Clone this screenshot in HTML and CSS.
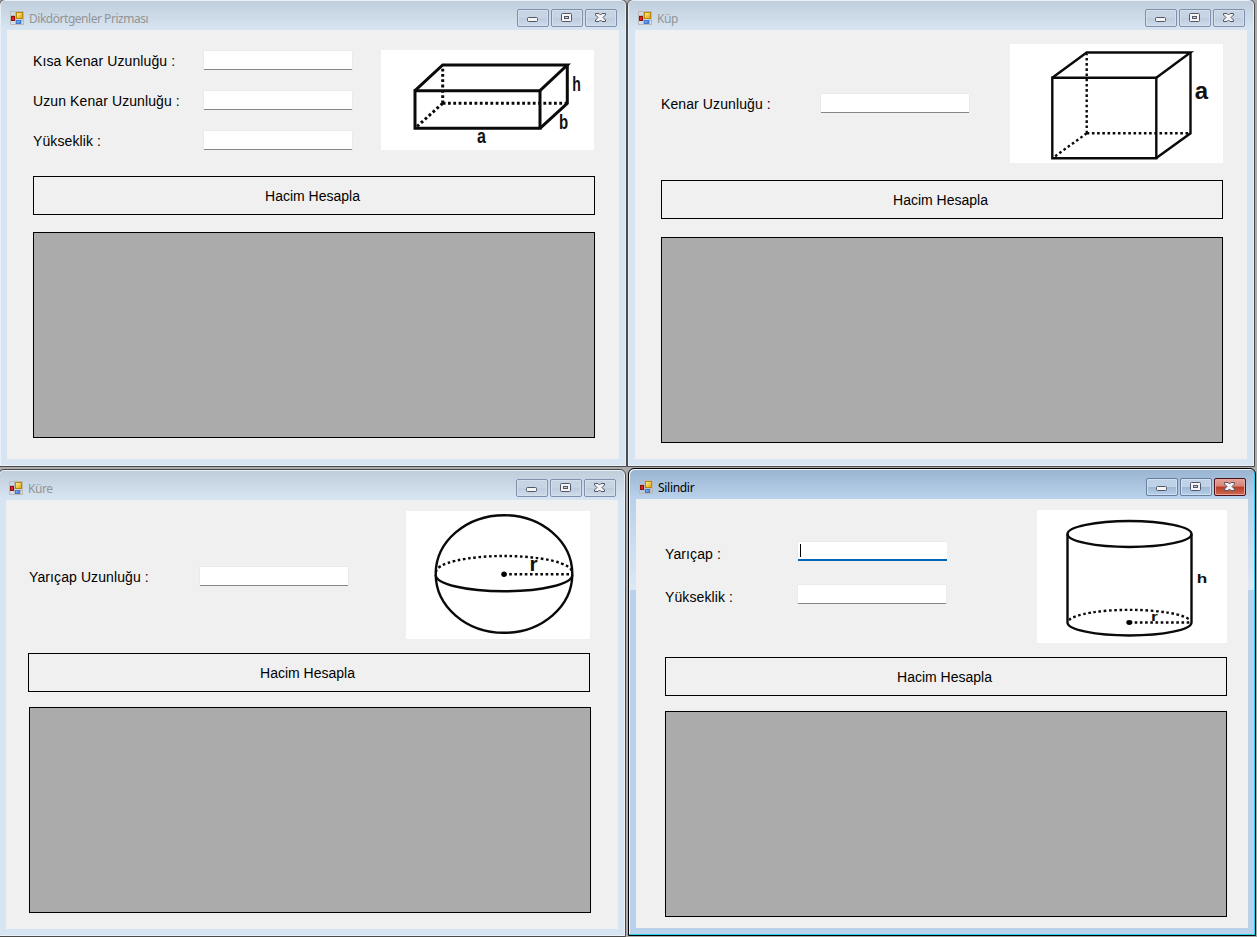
FILE: index.html
```html
<!DOCTYPE html>
<html lang="tr">
<head>
<meta charset="utf-8">
<title>Hacim Hesaplama</title>
<link rel="stylesheet" href="styles.css">
</head>
<body>
<svg class="defs" width="0" height="0">
  <defs>
    <linearGradient id="gold" x1="0" y1="0" x2="1" y2="1"><stop offset="0" stop-color="#fff3a0"/><stop offset="1" stop-color="#e0a000"/></linearGradient>
    <linearGradient id="blue" x1="0" y1="0" x2="1" y2="1"><stop offset="0" stop-color="#9cc4ff"/><stop offset="1" stop-color="#2f6bd8"/></linearGradient>
  </defs>
  <symbol id="app" viewBox="0 0 14 14">
    <path d="M.5 .5h13v13h-13zM.5 4.500h5M.5 9.500h13M5.500 .5v13M11.500 8v5.500" fill="none" stroke="#bcb9b9"/>
    <rect x="6.500" y="1.500" width="6" height="6" fill="url(#gold)" stroke="#b8860b"/>
    <rect x="1.500" y="5.500" width="3" height="4" fill="#d8281c" stroke="#8e0f0b"/>
    <rect x="6.500" y="9.500" width="4" height="3" fill="url(#blue)" stroke="#4478cf"/>
  </symbol>
  <symbol id="min" viewBox="0 0 30 16">
    <rect x="9.500" y="7.500" width="10" height="4" rx="1" fill="#f4f4f4" stroke="#535666"/>
  </symbol>
  <symbol id="max" viewBox="0 0 30 16">
    <rect x="9.500" y="3.500" width="10" height="8" rx="1" fill="#f4f4f4" stroke="#535666"/>
    <rect x="12.500" y="6.500" width="4" height="2" fill="#c3d0e4" stroke="#535666"/>
  </symbol>
  <symbol id="close" viewBox="0 0 30 16">
    <path d="M9.500 3.500h3.500l1.500 1.500 1.500-1.500h3.500v1.500l-2.500 2.500 2.500 2.500v1.500h-3.500l-1.500-1.500-1.500 1.500h-3.500v-1.500l2.500-2.500-2.500-2.500z" fill="#f4f4f4" stroke="#535666"/>
  </symbol>
</svg>
<main class="desktop">
  <section class="window prism">
    <header class="titlebar">
      <svg class="app-icon"><use href="#app"/></svg><h1 class="title">Dikdörtgenler Prizması</h1>
      <div class="controls"><button class="ctl"><svg><use href="#min"/></svg></button><button class="ctl"><svg><use href="#max"/></svg></button><button class="ctl"><svg><use href="#close"/></svg></button></div>
    </header>
    <div class="client">
      <div class="top">
        <div class="form">
          <label for="p1">Kısa Kenar Uzunluğu :</label><input id="p1" class="field">
          <label for="p2">Uzun Kenar Uzunluğu :</label><input id="p2" class="field">
          <label for="p3">Yükseklik :</label><input id="p3" class="field">
        </div>
        <svg class="figure" width="213" height="100" viewBox="0 0 213 100">
          <g class="line thick"><path d="M34 40.700H159V78.300H34z"/><path d="M34 40.700L61.700 15H186.300L159 40.700"/><path d="M186.300 15V53.300L159 78.300"/></g>
          <path class="dots thick" d="M61.700 53.300H186M61.700 53.300V17M61.700 53.300L34 78.300"/>
          <text transform="translate(191.300 41) scale(.72 1)" font-size="19.500">h</text>
          <text transform="translate(178 78.500) scale(.77 1)" font-size="19.500">b</text>
          <text transform="translate(96 92.500) scale(.8 1)" font-size="20">a</text>
        </svg>
      </div>
      <button class="calc">Hacim Hesapla</button>
      <div class="grid"></div>
    </div>
  </section>

  <section class="window cube">
    <header class="titlebar">
      <svg class="app-icon"><use href="#app"/></svg><h1 class="title">Küp</h1>
      <div class="controls"><button class="ctl"><svg><use href="#min"/></svg></button><button class="ctl"><svg><use href="#max"/></svg></button><button class="ctl"><svg><use href="#close"/></svg></button></div>
    </header>
    <div class="client">
      <div class="top">
        <div class="form"><label for="c1">Kenar Uzunluğu :</label><input id="c1" class="field"></div>
        <svg class="figure" width="213" height="119" viewBox="0 0 213 119">
          <g class="line"><path d="M42.300 33.700H146.300V114.200H42.300z"/><path d="M42.300 33.700L76.700 8.500H180.500L146.300 33.700"/><path d="M180.500 8.500V89.300L146.300 114"/></g>
          <path class="dots" d="M76.700 89.300H180M76.700 89.300V10M76.700 89.300L42.700 114"/>
          <text x="184.800" y="55" font-size="24">a</text>
        </svg>
      </div>
      <button class="calc">Hacim Hesapla</button>
      <div class="grid"></div>
    </div>
  </section>

  <section class="window sphere">
    <header class="titlebar">
      <svg class="app-icon"><use href="#app"/></svg><h1 class="title">Küre</h1>
      <div class="controls"><button class="ctl"><svg><use href="#min"/></svg></button><button class="ctl"><svg><use href="#max"/></svg></button><button class="ctl"><svg><use href="#close"/></svg></button></div>
    </header>
    <div class="client">
      <div class="top">
        <div class="form"><label for="s1">Yarıçap Uzunluğu :</label><input id="s1" class="field"></div>
        <svg class="figure" width="184" height="128" viewBox="0 0 184 128">
          <g class="line"><ellipse cx="98" cy="63" rx="68.300" ry="58.800"/><path d="M29.700 64A68.300 16.300 0 0 0 166.300 64"/></g>
          <path class="dots" d="M30 61A68 16 0 0 1 166 61M98 63.200H166"/>
          <circle cx="98" cy="63.200" r="2.700"/>
          <text x="123.500" y="60" font-size="21">r</text>
        </svg>
      </div>
      <button class="calc">Hacim Hesapla</button>
      <div class="grid"></div>
    </div>
  </section>

  <section class="window cylinder active">
    <header class="titlebar">
      <svg class="app-icon"><use href="#app"/></svg><h1 class="title">Silindir</h1>
      <div class="controls"><button class="ctl"><svg><use href="#min"/></svg></button><button class="ctl"><svg><use href="#max"/></svg></button><button class="ctl danger"><svg><use href="#close"/></svg></button></div>
    </header>
    <div class="client">
      <div class="top">
        <div class="form">
          <label for="y1">Yarıçap :</label><div id="y1" class="field focused"><span class="caret"></span></div>
          <label for="y2">Yükseklik :</label><input id="y2" class="field">
        </div>
        <svg class="figure" width="190" height="133" viewBox="0 0 190 133">
          <g class="line"><ellipse cx="92.500" cy="24" rx="62" ry="13"/><path d="M30.500 24V112.500A62 13 0 0 0 154.500 112.500V24"/></g>
          <path class="dots" d="M32 110A62 13 0 0 1 153 110M92.500 112.500H154"/>
          <ellipse cx="92.300" cy="112.500" rx="3" ry="2.400"/>
          <text transform="translate(159.800 73) scale(1.320 1)" font-size="13">h</text>
          <text transform="translate(114 110.500) scale(1.300 1)" font-size="13.500">r</text>
        </svg>
      </div>
      <button class="calc">Hacim Hesapla</button>
      <div class="grid"></div>
    </div>
  </section>
</main>
</body>
</html>
```
FILE: styles.css
```css
* { box-sizing: border-box; }
body { margin: 0; }
.defs { position: absolute; }
.desktop {
  position: relative;
  width: 1257px;
  height: 937px;
  overflow: hidden;
  background: #ababab;
  font-family: "Liberation Sans", Arial, sans-serif;
}

/* Window frame */
.window {
  position: absolute;
  width: 628px;
  height: 468px;
  padding: 0 7px 6px;
  border: 1px solid #4a4a4a;
  border-radius: 6px 6px 0 0;
  background: linear-gradient(#bfcddb, #d7e4f2 29px);
  box-shadow: inset 0 0 0 1px #e9eff6;
}
.prism { left: -1px; top: -1px; }
.cube { left: 627px; top: -1px; }
.sphere { left: -2px; top: 469px; }
.cylinder { left: 628px; top: 468px; }
.active {
  border-color: #000;
  background:
    linear-gradient(#b9d1ea, #dce8f6) 0 30px / 100% 91px no-repeat,
    linear-gradient(#99b4d1, #b9d1ea 29px);
  box-shadow: inset -1px -1px #28cfea, inset 1px 1px #f0f6fb;
}
.titlebar {
  display: flex;
  align-items: flex-start;
  height: 30px;
  padding: 9px 2px 0 3px;
}
.app-icon { flex: none; width: 14px; height: 14px; margin-top: 2px; }
.title {
  flex: 1;
  margin: 0 0 0 5px;
  font: 12px/20px "Noto Sans", "Open Sans", sans-serif;
  letter-spacing: -0.47px;
  color: #949494;
}
.active .title { color: #000; letter-spacing: -0.3px; }
.controls { display: flex; flex: none; gap: 2px; }
.ctl {
  width: 32px;
  height: 18px;
  padding: 0;
  border: 1px solid #8290b0;
  border-radius: 2px;
  background: linear-gradient(#c6d4e3 50%, #bdcbdd 50%, #cddbeb);
  box-shadow: inset 0 0 0 1px #d5e0ed;
}
.ctl svg { display: block; width: 30px; height: 16px; }
.active .ctl {
  border-color: #6a7f9e;
  background: linear-gradient(#bfd2e8 50%, #9db7d5 50%, #b7d0ea);
  box-shadow: inset 0 0 0 1px #cfe0f1;
}
.active .danger {
  border-color: #4d1119;
  background: linear-gradient(#e6a298, #d98478 45%, #b83a26 50%, #cf6a52);
  box-shadow: inset 0 0 0 1px #e5a79b;
}

/* Form contents */
.client {
  width: 612px;
  height: 429px;
  background: #f0f0f0;
  padding: 20px 25px 0 26px;
}
.top { display: flex; justify-content: space-between; }
.form {
  display: grid;
  grid-template-columns: 171px 148px;
  grid-auto-rows: 19px;
  row-gap: 21px;
  margin-top: 1px;
  align-content: start;
}
.form label {
  font-size: 14px;
  line-height: 21px;
  letter-spacing: 0.1px;
  white-space: nowrap;
  color: #000;
}
.field {
  width: 148px;
  height: 19px;
  padding: 0 3px;
  border: 0;
  border-bottom: 1px solid #868686;
  background: #fff;
  box-shadow: 0 -1px #eaeaea, -1px 0 #eaeaea, 1px 0 #eaeaea;
}
.focused {
  width: 149px;
  border-bottom: 2px solid #0067b8;
  padding: 2px 2px 0;
  box-shadow: 0 -1px #eaeaea, -1px 0 #eaeaea;
}
.caret { display: block; width: 1px; height: 13px; background: #000; }
.calc {
  display: block;
  width: 562px;
  height: 39px;
  margin: 26px 0 0;
  padding: 0 3px 0 0;
  border: 1px solid #000;
  background: #f0f0f0;
  font: 14px/20px "Liberation Sans", Arial, sans-serif;
  color: #000;
}
.grid {
  width: 562px;
  height: 206px;
  margin-top: 17px;
  border: 1px solid #000;
  background: #ababab;
}
.cube .client { padding: 14px 24px 0 26px; }
.cube .form { grid-template-columns: 160px 148px; margin-top: 50px; }
.cube .calc { margin-top: 17px; }
.cube .grid { margin-top: 18px; }

.sphere .client { padding: 11px 28px 0 22px; }
.sphere .form { grid-template-columns: 171px 148px; margin: 56px 0 0 1px; }
.sphere .calc { margin-top: 14px; }
.sphere .grid { margin: 15px 0 0 1px; }

.cylinder .client { padding: 11px 21px 0 29px; }
.cylinder .form { grid-template-columns: 133px 148px; row-gap: 24px; margin-top: 32px; }
.cylinder label { line-height: 24px; }
.cylinder .calc { margin-top: 14px; }
.cylinder .grid { margin-top: 15px; }

/* Solid figures */
.figure { display: block; flex: none; background: #fff; }
.figure text { font-family: "Liberation Sans", Arial, sans-serif; font-weight: 700; fill: #111; }
.line { fill: none; stroke: #0a0a0a; stroke-width: 2.4; }
.dots { fill: none; stroke: #0a0a0a; stroke-width: 2.4; stroke-dasharray: 2.6 2.6; }
.thick { stroke-width: 3; }
.dots.thick { stroke-width: 3; stroke-dasharray: 2.8 2.5; }
```
